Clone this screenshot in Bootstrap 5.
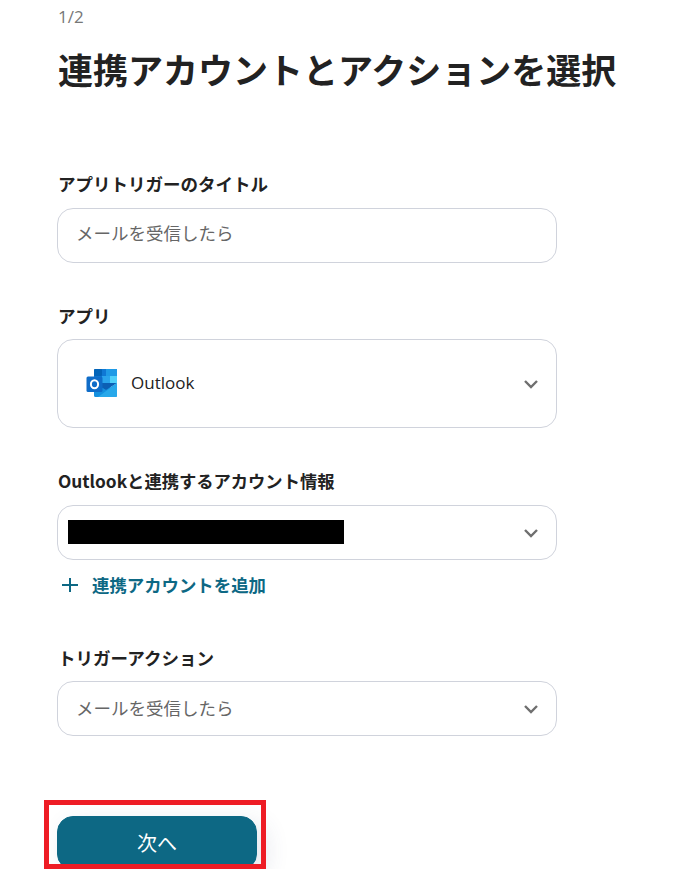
<!DOCTYPE html>
<html lang="ja">

<head>
    <meta charset="UTF-8" />
    <meta name="viewport" content="width=device-width, initial-scale=1.0" />
    <title>連携アカウントとアクションを選択</title>
    <link rel="stylesheet" href="https://cdn.jsdelivr.net/npm/bootstrap@5.3.3/dist/css/bootstrap.min.css" />
    <style>
        html, body { height: 869px; overflow: hidden; }
        body { font-family: "Noto Sans CJK JP", "Noto Sans", sans-serif; color: #222; background: #fff; }
        .page-wrap { padding: 7px 0 0 58px; width: 558px; box-sizing: content-box; }
        .step-no { font-family: "Open Sans", sans-serif; font-size: 17px; line-height: 20px; color: #777; }
        .page-title { font-size: 35px; line-height: 54px; font-weight: 700; margin: 15px 0 75px; white-space: nowrap; color: #222; }
        .field-label { font-size: 17.5px; line-height: 26px; font-weight: 700; margin-bottom: 11px; display: block; }
        .label-tight { margin-bottom: 10px; }
        .label-latin { font-size: 17.3px; }
        .field-box { width: 500px; margin-left: -1px; height: 55px; border: 1px solid #d0d3dc; border-radius: 16px; padding: 0 18px; font-size: 17.5px; color: #666; }
        .field-tall { height: 89px; padding-left: 28px; color: #222; }
        .field-tall .app-name { font-family: "Open Sans", sans-serif; font-size: 17px; margin-left: 13px; margin-bottom: 2px; }
        .field-mask { padding-left: 10px; }
        .mask-bar { width: 276px; height: 24px; background: #000; margin-bottom: 1px; }
        .chev { margin-left: auto; margin-right: -1px; flex-shrink: 0; }
        .group-gap { margin-top: 40px; }
        .group-gap-wide { margin-top: 47px; }
        .add-link { color: #0d6884; font-size: 17.4px; font-weight: 700; line-height: 26px; margin-top: 12px; text-decoration: none; gap: 10px; }
        .next-btn { width: 200px; height: 54px; margin-left: -1px; margin-top: 80px; border-radius: 16px; background: #0d6884; border-color: #0d6884; color: #fff; font-size: 20px; box-shadow: 8px 8px 24px rgba(60, 70, 120, .14); }
        .red-frame { position: absolute; left: 44px; top: 800px; width: 222px; height: 69px; border: 5px solid #ee1c25; pointer-events: none; }
    </style>
</head>

<body>
    <div class="page-wrap">
        <div class="step-no">1/2</div>
        <h1 class="page-title">連携アカウントとアクションを選択</h1>

        <label class="field-label">アプリトリガーのタイトル</label>
        <div class="field-box d-flex align-items-center pb-1">メールを受信したら</div>

        <label class="field-label label-tight group-gap">アプリ</label>
        <div class="field-box field-tall d-flex align-items-center">
            <!-- outlook logo -->
            <svg width="32" height="29" viewBox="0 0 32 29">
                <path fill="#0f78d4" d="M8 1.500A1.500 1.500 0 0 1 9.500 0h20A1.500 1.500 0 0 1 31 1.500V14H8z" />
                <rect x="8" y="0" width="8" height="7" fill="#0364b8" rx="1" />
                <rect x="20" y="0" width="11" height="7" fill="#1f9ae6" />
                <rect x="16" y="7" width="8" height="7" fill="#2aa4ec" />
                <rect x="24" y="7" width="7" height="7" fill="#50d0fa" />
                <rect x="16" y="14" width="8" height="7" fill="#1a78c8" />
                <path fill="#0c5fb4" d="M8 14h23l-11 7z" />
                <path fill="#1490df" d="M8 14l12 7 11-7v12.500a1.500 1.500 0 0 1-1.500 1.500h-20A1.500 1.500 0 0 1 8 26.500z" />
                <path fill="#28a8ea" d="M31 14v12.500a1.500 1.500 0 0 1-1.500 1.500H12z" />
                <rect x="0.500" y="7.500" width="16" height="15.500" rx="1.500" fill="#0f6cc8" />
                <ellipse cx="8.500" cy="15.200" rx="3.600" ry="4" fill="none" stroke="#fff" stroke-width="2" />
            </svg>
            <span class="app-name">Outlook</span>
            <svg class="chev" width="16" height="10" viewBox="0 0 16 10"><path d="M2 2l6 6 6-6" fill="none" stroke="#6f6f6f" stroke-width="2.400" /></svg>
        </div>

        <label class="field-label label-latin group-gap">Outlookと連携するアカウント情報</label>
        <div class="field-box field-mask d-flex align-items-center">
            <div class="mask-bar"></div>
            <svg class="chev" width="16" height="10" viewBox="0 0 16 10"><path d="M2 2l6 6 6-6" fill="none" stroke="#6f6f6f" stroke-width="2.400" /></svg>
        </div>
        <a href="#" class="add-link d-flex align-items-center">
            <svg width="24" height="16" viewBox="0 0 24 16"><path d="M4 8h16M12 1v14" fill="none" stroke="#0d6884" stroke-width="2" /></svg>
            連携アカウントを追加
        </a>

        <label class="field-label label-tight group-gap-wide">トリガーアクション</label>
        <div class="field-box d-flex align-items-center">
            メールを受信したら
            <svg class="chev" width="16" height="10" viewBox="0 0 16 10"><path d="M2 2l6 6 6-6" fill="none" stroke="#6f6f6f" stroke-width="2.400" /></svg>
        </div>

        <button type="button" class="btn btn-primary next-btn d-block">次へ</button>
    </div>
    <div class="red-frame"></div>

    <script src="https://cdn.jsdelivr.net/npm/bootstrap@5.3.3/dist/js/bootstrap.bundle.min.js"></script>
</body>

</html>
